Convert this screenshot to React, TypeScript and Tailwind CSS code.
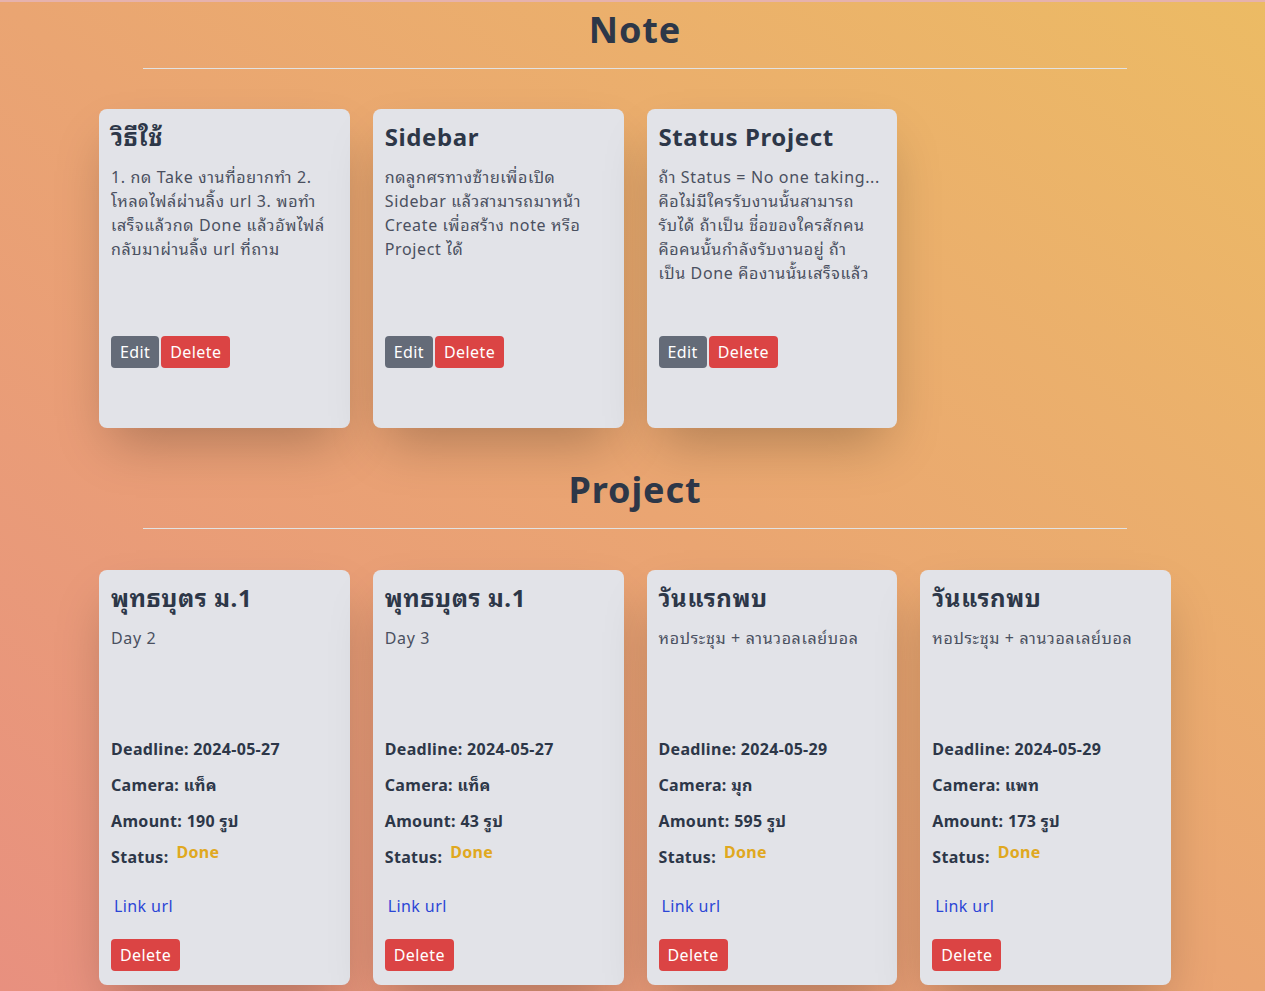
const notes = [
  {
    title: "วิธีใช้",
    lines: [
      "1. กด Take งานที่อยากทำ 2.",
      "โหลดไฟล์ผ่านลิ้ง url 3. พอทำ",
      "เสร็จแล้วกด Done แล้วอัพไฟล์",
      "กลับมาผ่านลิ้ง url ที่ถาม",
    ],
  },
  {
    title: "Sidebar",
    lines: [
      "กดลูกศรทางซ้ายเพื่อเปิด",
      "Sidebar แล้วสามารถมาหน้า",
      "Create เพื่อสร้าง note หรือ",
      "Project ได้",
    ],
  },
  {
    title: "Status Project",
    lines: [
      "ถ้า Status = No one taking...",
      "คือไม่มีใครรับงานนั้นสามารถ",
      "รับได้ ถ้าเป็น ชื่อของใครสักคน",
      "คือคนนั้นกำลังรับงานอยู่ ถ้า",
      "เป็น Done คืองานนั้นเสร็จแล้ว",
    ],
  },
];

const projects = [
  { title: "พุทธบุตร ม.1", desc: "Day 2", deadline: "2024-05-27", camera: "แท็ค", amount: 190 },
  { title: "พุทธบุตร ม.1", desc: "Day 3", deadline: "2024-05-27", camera: "แท็ค", amount: 43 },
  { title: "วันแรกพบ", desc: "หอประชุม + ลานวอลเลย์บอล", deadline: "2024-05-29", camera: "มุก", amount: 595 },
  { title: "วันแรกพบ", desc: "หอประชุม + ลานวอลเลย์บอล", deadline: "2024-05-29", camera: "แพท", amount: 173 },
];

function Heading({ label }: { label: string }) {
  return (
    <div className="ml-[143px] w-[984px]">
      <h1 className="text-center text-4xl font-bold text-[#2d3748] tracking-wide">{label}</h1>
      <hr className="mt-[18px] border-t border-[#e2e2e2]" />
    </div>
  );
}

export default function App() {
  return (
    <div
      className="min-h-screen overflow-hidden border-t-2 border-[#e6b2ad] bg-gradient-to-tr from-[#e8907f] via-[#eaa572] to-[#ecbb64] pb-2"
      style={{ fontFamily: '"Noto Sans", "Noto Sans Thai Looped", Loma, "Noto Sans Thai", "Liberation Sans", sans-serif' }}
    >
      <div className="pt-[8px]">
        <Heading label="Note" />
      </div>

      <div className="ml-[99px] mt-[40px] grid w-[1072px] grid-cols-4 gap-[23px]">
        {notes.map((n) => (
          <div key={n.title} className="flex h-[319px] flex-col rounded-lg bg-[#e2e3e8] p-3 shadow-2xl">
            <h2 className="text-2xl font-bold text-[#2d3748] tracking-wide">{n.title}</h2>
            <p className="mt-3 h-[171px] text-base leading-6 tracking-[0.04em] text-[#4a5060]">
              {n.lines.map((l) => (
                <span key={l} className="block whitespace-nowrap">
                  {l}
                </span>
              ))}
            </p>
            <div className="flex gap-[2px]">
              <button className="rounded bg-[#646b78] px-[9px] py-1 text-base tracking-wide text-white">Edit</button>
              <button className="rounded bg-[#db4444] px-[9px] py-1 text-base tracking-wide text-white">Delete</button>
            </div>
          </div>
        ))}
      </div>

      <div className="mt-[42px]">
        <Heading label="Project" />
      </div>

      <div className="ml-[99px] mt-[41px] grid w-[1072px] grid-cols-4 gap-[23px]">
        {projects.map((p, i) => (
          <div key={i} className="flex flex-col rounded-lg bg-[#e2e3e8] px-3 pt-3 pb-[14px] shadow-2xl">
            <h2 className="text-2xl font-bold text-[#2d3748] tracking-wide">{p.title}</h2>
            <p className="mt-3 h-[111px] text-base leading-6 tracking-[0.04em] text-[#4a5060]">{p.desc}</p>
            <div className="flex flex-col gap-3 text-base font-bold tracking-[0.02em] text-[#2d3748]">
              <p>Deadline: {p.deadline}</p>
              <p>Camera: {p.camera}</p>
              <p>Amount: {p.amount} รูป</p>
              <p className="flex items-start gap-2">
                Status: <span className="-mt-[5px] text-[#e0a820]">Done</span>
              </p>
            </div>
            <a className="ml-[3px] mt-[25px] text-base leading-6 tracking-wide text-[#2b46d6]">Link url</a>
            <div className="mt-[21px]">
              <button className="rounded bg-[#db4444] px-[9px] py-1 text-base tracking-wide text-white">Delete</button>
            </div>
          </div>
        ))}
      </div>
    </div>
  );
}
